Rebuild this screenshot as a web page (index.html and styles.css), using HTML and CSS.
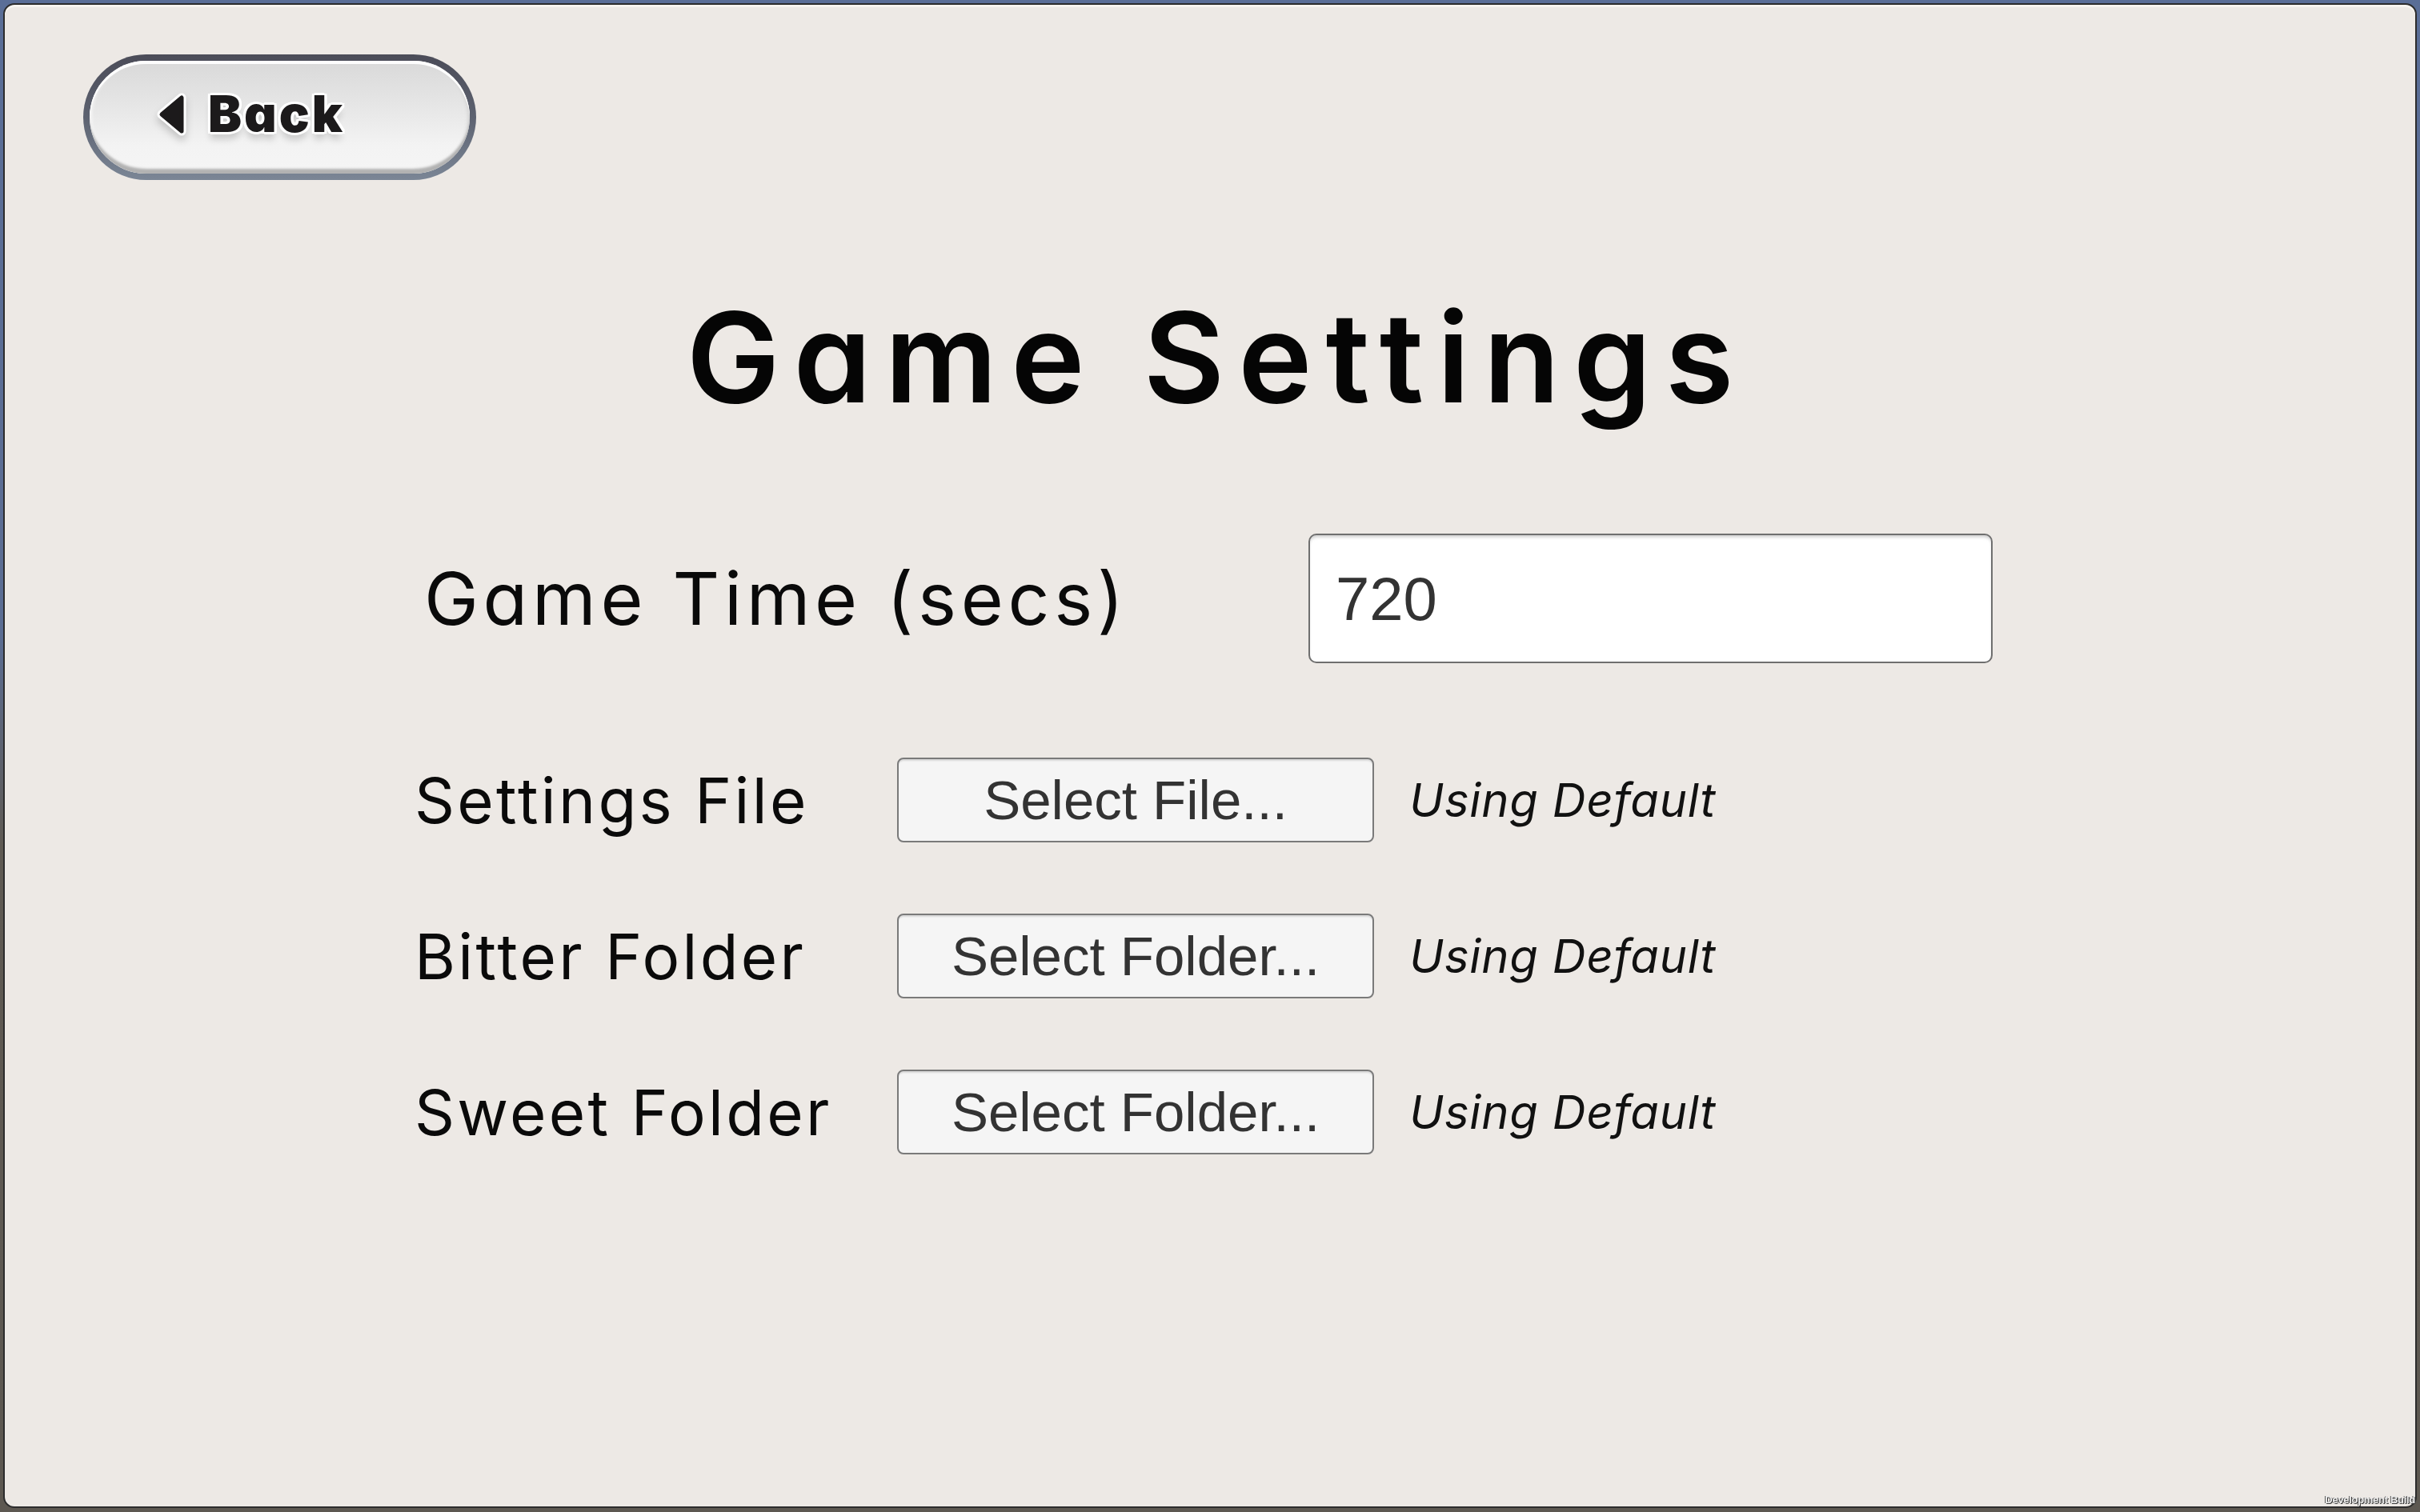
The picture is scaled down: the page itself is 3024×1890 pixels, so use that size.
FILE: index.html
```html
<!DOCTYPE html>
<html lang="en">
<head>
<meta charset="utf-8">
<title>Game Settings</title>
<link rel="stylesheet" href="styles.css">
</head>
<body>
<div class="window">
  <header class="topbar">
    <button class="back-btn" type="button">
      <span class="back-inner">
        <svg class="back-arrow" width="38" height="54" viewBox="0 0 38 54">
          <path d="M31 6 L31 48 L6 27 Z" fill="#fff" stroke="#fff" stroke-width="11" stroke-linejoin="round"/>
          <path d="M31 6 L31 48 L6 27 Z" fill="#1c1a1b" stroke="#1c1a1b" stroke-width="5" stroke-linejoin="round"/>
        </svg>
        <span class="back-label">Back</span>
      </span>
    </button>
  </header>

  <h1 class="title">Game Settings</h1>

  <div class="form">
    <div class="time-row">
      <span class="time-label">Game Time (secs)</span>
      <div class="time-input">720</div>
    </div>

    <div class="file-rows">
      <div class="file-row">
        <span class="file-label">Settings File</span>
        <button class="select-btn" type="button">Select File...</button>
        <span class="note">Using Default</span>
      </div>
      <div class="file-row">
        <span class="file-label">Bitter Folder</span>
        <button class="select-btn" type="button">Select Folder...</button>
        <span class="note">Using Default</span>
      </div>
      <div class="file-row">
        <span class="file-label">Sweet Folder</span>
        <button class="select-btn" type="button">Select Folder...</button>
        <span class="note">Using Default</span>
      </div>
    </div>
  </div>
</div>
<div class="devbuild">Development Build</div>
</body>
</html>
```
FILE: styles.css
```css
* { box-sizing: border-box; }

html, body {
  margin: 0;
  height: 100%;
}

body {
  background: linear-gradient(#5a6e97 0%, #5b6d93 42%, #5f5a53 56%, #5d5851 100%);
  font-family: Inter, "Noto Sans", sans-serif;
  font-feature-settings: "cv11";
  color: #0a0a0a;
  overflow: hidden;
}

.window {
  position: relative;
  margin: 4px 4px 5px 4px;
  height: calc(100vh - 9px);
  border: 2px solid #2c2c2c;
  border-radius: 14px;
  background: #ede9e5;
  box-shadow: inset 0 3px 0 #f8f5f1;
  padding-top: 62px;
}

.topbar {
  padding-left: 98px;
  display: flex;
}

.back-btn {
  width: 491px;
  height: 157px;
  padding: 8px;
  border: none;
  border-radius: 80px;
  background: linear-gradient(#4b4c58, #5d6270 50%, #7b8696);
  cursor: pointer;
  font: inherit;
}

.back-inner {
  display: flex;
  align-items: center;
  gap: 26px;
  height: 100%;
  padding-left: 84px;
  padding-bottom: 8px;
  border-radius: 72px;
  background: linear-gradient(#d9d9d9 0%, #e6e6e6 40%, #f3f3f3 75%, #f5f5f5 100%);
  box-shadow: inset 0 4px 0 #fdfdfd, inset 0 -8px 3px -2px #b2b2b2, inset 4px 0 4px -2px #fafafa, inset -4px 0 4px -2px #d0d0d0;
}

.back-arrow {
  display: block;
  filter: drop-shadow(0 6px 5px rgba(0,0,0,0.18));
}

.back-label {
  font-family: Inter, "Noto Sans", sans-serif;
  font-weight: 900;
  font-size: 63px;
  letter-spacing: 3px;
  color: #1c1a1b;
  line-height: 1;
  text-shadow:
    3px 0 0 #fff, -3px 0 0 #fff, 0 3px 0 #fff, 0 -3px 0 #fff,
    2px 2px 0 #fff, -2px 2px 0 #fff, 2px -2px 0 #fff, -2px -2px 0 #fff,
    3px 2px 0 #fff, -3px 2px 0 #fff, 3px -2px 0 #fff, -3px -2px 0 #fff,
    0 9px 8px rgba(0,0,0,0.16);
}

.title {
  margin: 145px 0 0 0;
  text-align: center;
  font-size: 156px;
  font-weight: 600;
  line-height: 154px;
  letter-spacing: 17px;
  padding-left: 17px;
  color: #050505;
}

.form {
  margin: 143px 0 0 512px;
}

.time-row {
  display: flex;
  align-items: center;
  height: 162px;
  margin-bottom: 118px;
}

.time-label {
  width: 1117px;
  padding-left: 12px;
  font-size: 91px;
  letter-spacing: 5.7px;
  font-weight: 400;
}

.time-input {
  width: 855px;
  height: 162px;
  display: flex;
  align-items: center;
  padding-left: 32px;
  background: #ffffff;
  border: 2px solid #6f6f6f;
  border-radius: 10px;
  box-shadow: inset 0 4px 4px -2px rgba(0,0,0,0.22);
  font-family: "Liberation Sans", Arial, sans-serif;
  font-size: 76px;
  color: #333333;
}

.file-rows {
  display: flex;
  flex-direction: column;
  gap: 89px;
}

.file-row {
  display: grid;
  grid-template-columns: 559px 596px auto;
  column-gap: 44px;
  align-items: center;
  height: 106px;
}

.file-label {
  font-size: 78px;
  letter-spacing: 3.3px;
  font-weight: 400;
}

.select-btn {
  height: 106px;
  padding: 0;
  background: #f5f5f5;
  border: 2px solid #7a7a7a;
  border-radius: 8px;
  box-shadow: inset 0 3px 2px -1px rgba(0,0,0,0.12);
  font-family: "Liberation Sans", Arial, sans-serif;
  font-size: 69px;
  color: #333333;
  cursor: pointer;
}

.note {
  font-style: italic;
  font-size: 58px;
  letter-spacing: 0.8px;
  color: #111;
}

.devbuild {
  position: fixed;
  right: 6px;
  bottom: 8px;
  font-family: "Liberation Sans", Arial, sans-serif;
  font-weight: 700;
  font-size: 13px;
  letter-spacing: -0.3px;
  color: #eeeeee;
  text-shadow: 1px 1px 0 #3a3a3a, -1px 0 0 #555;
}
```
